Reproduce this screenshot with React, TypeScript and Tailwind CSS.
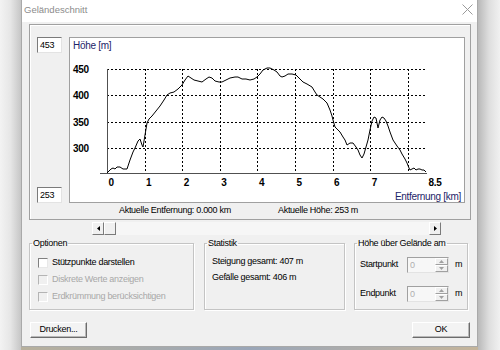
const profile: [number, number][] = [
  [107, 173], [109, 171], [111, 169], [113, 168], [115, 169], [117, 167], [120, 167], [123, 169],
  [127, 169], [130, 160], [133, 152], [135, 148], [138, 141], [140, 139], [142, 145], [143, 147],
  [145, 135], [147, 123], [149, 119], [152, 116], [156, 111], [160, 106], [164, 100], [167, 95],
  [170, 93], [174, 92], [178, 89], [182, 85], [185, 80], [188, 76], [191, 78], [194, 80],
  [198, 81], [202, 82], [206, 79], [209, 77], [212, 78], [215, 81], [219, 82], [222, 82],
  [226, 80], [230, 78], [235, 77], [238, 77], [242, 79], [246, 79], [250, 80], [254, 79],
  [257, 77], [260, 74], [263, 70], [267, 68], [270, 68], [274, 70], [277, 72], [280, 76],
  [282, 77], [285, 76], [288, 74], [292, 74], [296, 75], [300, 79], [303, 82], [307, 84],
  [312, 87], [315, 92], [317, 95], [320, 97], [323, 99], [327, 103], [330, 110], [332, 116],
  [333, 120], [335, 127], [338, 130], [340, 132], [343, 137], [345, 140], [347, 145], [350, 143],
  [353, 143], [356, 147], [358, 150], [360, 155], [362, 158], [364, 154], [366, 147], [368, 140],
  [370, 130], [372, 121], [374, 117], [376, 118], [378, 128], [380, 120], [382, 117], [384, 118],
  [386, 121], [388, 126], [390, 132], [393, 140], [395, 143], [397, 146], [400, 150], [402, 154],
  [405, 159], [407, 163], [409, 168], [410, 170], [412, 169], [414, 168], [416, 170], [418, 169],
  [420, 169], [422, 170], [424, 170], [426, 172],
];

const yTicks = [
  { label: "450", y: 31.5 },
  { label: "400", y: 57.5 },
  { label: "350", y: 84.5 },
  { label: "300", y: 110.5 },
];

const xTicks = ["0", "1", "2", "3", "4", "5", "6", "7"];

function ProfileChart() {
  // chart box content starts at (70, 38) on the page
  const pts = profile.map(([x, y]) => `${x - 70},${y - 38}`).join(" ");
  const x0 = 37;
  const kx = 37.6;
  const font = "'Liberation Sans', Arial, sans-serif";

  return (
    <svg width="394" height="164" className="block">
      {yTicks.map((t) => (
        <line key={t.label} x1={x0} x2={357} y1={t.y} y2={t.y} stroke="#000" strokeDasharray="2 2" shapeRendering="crispEdges" />
      ))}
      {[1, 2, 3, 4, 5, 6, 7, 8].map((k) => {
        const x = Math.round(x0 + k * kx) + 0.5;
        return <line key={k} x1={x} x2={x} y1={31} y2={135} stroke="#000" strokeDasharray="2 2" shapeRendering="crispEdges" />;
      })}
      <line x1={37.5} x2={37.5} y1={31} y2={135} stroke="#505050" shapeRendering="crispEdges" />
      <line x1={30} x2={357} y1={135.5} y2={135.5} stroke="#505050" shapeRendering="crispEdges" />
      <polyline points={pts} fill="none" stroke="#000" strokeWidth={1} />

      <text x={3} y={11} fontFamily={font} fontSize={10} fill="#1c2468">Höhe [m]</text>
      {yTicks.map((t) => (
        <text key={t.label} x={3} y={t.y + 3.5} fontFamily={font} fontSize={10} fontWeight="bold" fill="#000">
          {t.label}
        </text>
      ))}
      {xTicks.map((l, k) => (
        <text key={l} x={x0 + k * kx + 1.5} y={148} fontFamily={font} fontSize={10} fontWeight="bold" fill="#000">
          {l}
        </text>
      ))}
      <text x={358.5} y={148} fontFamily={font} fontSize={10} fontWeight="bold" fill="#000">8.5</text>
      <text x={391} y={162} textAnchor="end" fontFamily={font} fontSize={10} fill="#1c2468">Entfernung [km]</text>
    </svg>
  );
}

function Sunken({ value, className }: { value: string; className?: string }) {
  return (
    <div
      className={
        "h-[16px] bg-white border border-t-[#7a7a7a] border-l-[#7a7a7a] border-r-[#e3e3e3] border-b-[#e3e3e3] pl-[2px] leading-[14px] text-black " +
        (className ?? "")
      }
    >
      {value}
    </div>
  );
}

function Check({ label, disabled }: { label: string; disabled?: boolean }) {
  return (
    <div className="h-[17px] flex items-center gap-[4px]">
      <div
        className={
          disabled
            ? "w-[10px] h-[10px] bg-[#f0f0f0] border border-t-[#b4b4b4] border-l-[#b4b4b4] border-r-white border-b-white"
            : "w-[10px] h-[10px] bg-white border border-t-[#808080] border-l-[#808080] border-r-[#e8e8e8] border-b-[#e8e8e8]"
        }
      />
      <span className={disabled ? "text-[#a8a8a8]" : "text-black"}>{label}</span>
    </div>
  );
}

function SpinField() {
  return (
    <div className="w-[42px] h-[16px] flex bg-[#f7f7f7] border border-t-[#a0a0a0] border-l-[#a0a0a0] border-r-[#e3e3e3] border-b-[#e3e3e3]">
      <span className="flex-1 pl-[2px] leading-[14px] text-[#b0b0b0]">0</span>
      <div className="w-[13px] flex flex-col">
        <div className="flex-1 flex items-center justify-center bg-[#f0f0f0] border border-t-white border-l-white border-r-[#a0a0a0] border-b-[#a0a0a0]">
          <svg width="5" height="3"><polygon points="0,3 5,3 2.5,0" fill="#a0a0a0" /></svg>
        </div>
        <div className="flex-1 flex items-center justify-center bg-[#f0f0f0] border border-t-white border-l-white border-r-[#a0a0a0] border-b-[#a0a0a0]">
          <svg width="5" height="3"><polygon points="0,0 5,0 2.5,3" fill="#a0a0a0" /></svg>
        </div>
      </div>
    </div>
  );
}

function Group({ title, className, children }: { title: string; className: string; children: React.ReactNode }) {
  return (
    <fieldset className={"h-[72px] border border-[#c4c4c4] shadow-[inset_1px_1px_0_#fff,1px_1px_0_#fff] " + className}>
      <legend className="ml-[2px] px-[1px] leading-[11px] text-black">{title}</legend>
      {children}
    </fieldset>
  );
}

function Button({ label, className }: { label: string; className: string }) {
  return (
    <div
      className={
        "h-[16px] flex items-center justify-center bg-[#f3f3f3] border border-t-white border-l-white border-r-[#6c6c6c] border-b-[#6c6c6c] shadow-[inset_-1px_-1px_0_#b8b8b8] text-black " +
        className
      }
    >
      {label}
    </div>
  );
}

function ArrowButton({ dir }: { dir: "left" | "right" }) {
  return (
    <div className="w-[12px] h-full flex items-center justify-center bg-[#f0f0f0] border border-t-white border-l-white border-r-[#7a7a7a] border-b-[#7a7a7a]">
      <svg width="3" height="5">
        <polygon points={dir === "left" ? "3,0 3,5 0,2.5" : "0,0 0,5 3,2.5"} fill="#000" />
      </svg>
    </div>
  );
}

export default function App() {
  return (
    <div className="w-[500px] h-[350px] flex overflow-hidden bg-[#ececec] font-['Liberation_Sans',Arial,sans-serif] text-[9px] tracking-[-0.3px]">
      <div className="w-[21px] h-full bg-gradient-to-r from-[#f3f3f3] via-[#e6e6e6] to-[#c6c6c6]" />

      <div className="w-[457px] h-full flex flex-col">
        <div className="h-[347px] flex flex-col bg-[#f0f0f0] border-x border-b border-[#a9a9a9]">
          <div className="h-[22px] shrink-0 bg-white flex items-center justify-between pl-[2px] pr-[4px] pb-[2px]">
            <span className="text-[9.5px] tracking-normal text-[#8c8c8c]">Geländeschnitt</span>
            <svg width="11" height="11" className="mt-[-2px]">
              <path d="M0.5 0.5 L10.5 10.5 M10.5 0.5 L0.5 10.5" stroke="#9a9a9a" strokeWidth="1" />
            </svg>
          </div>

          <div className="mt-[2px] ml-[7px] w-[442px] h-[196px] shrink-0 border border-[#a0a0a0] shadow-[inset_1px_1px_0_#fff] pt-[12px] pl-[7px]">
            <div className="flex gap-[7px]">
              <div className="w-[25px] h-[166px] flex flex-col justify-between">
                <Sunken value="453" />
                <Sunken value="253" />
              </div>
              <div className="w-[396px] h-[166px] bg-white border border-[#a0a0a0]">
                <ProfileChart />
              </div>
            </div>
            <div className="h-[15px] flex items-center pl-[82px] text-black">
              <span className="w-[159px]">Aktuelle Entfernung: 0.000 km</span>
              <span>Aktuelle Höhe: 253 m</span>
            </div>
          </div>

          <div className="mt-[2px] ml-[70px] w-[349px] h-[13px] shrink-0 flex bg-[#f6f6f6]">
            <ArrowButton dir="left" />
            <div className="w-[12px] h-full bg-[#f0f0f0] border border-t-white border-l-white border-r-[#7a7a7a] border-b-[#7a7a7a]" />
            <div className="flex-1" />
            <ArrowButton dir="right" />
          </div>

          <div className="mt-[3px] ml-[7px] flex shrink-0">
            <Group title="Optionen" className="w-[165px]">
              <div className="pt-[5px] pl-[8px]">
                <Check label="Stützpunkte darstellen" />
                <Check label="Diskrete Werte anzeigen" disabled />
                <Check label="Erdkrümmung berücksichtigen" disabled />
              </div>
            </Group>
            <Group title="Statistik" className="w-[141px] ml-[10px]">
              <div className="pt-[5px] pl-[7px] text-black">
                <div className="h-[16px] flex items-center">Steigung gesamt: 407 m</div>
                <div className="h-[16px] flex items-center">Gefälle gesamt: 406 m</div>
              </div>
            </Group>
            <Group title="Höhe über Gelände am" className="w-[114px] ml-[9px]">
              <div className="pt-[8px] pl-[5px] text-black">
                <div className="h-[16px] flex items-center">
                  <span className="w-[47px]">Startpunkt</span>
                  <SpinField />
                  <span className="ml-[6px]">m</span>
                </div>
                <div className="mt-[13px] h-[16px] flex items-center">
                  <span className="w-[47px]">Endpunkt</span>
                  <SpinField />
                  <span className="ml-[6px]">m</span>
                </div>
              </div>
            </Group>
          </div>

          <div className="mt-[12px] flex justify-between pl-[8px] pr-[7px]">
            <Button label="Drucken..." className="w-[57px]" />
            <Button label="OK" className="w-[58px]" />
          </div>
        </div>
        <div className="flex-1 bg-gradient-to-r from-[#b7b09c] via-[#9aa6b8] to-[#c4b49a]" />
      </div>

      <div className="w-[22px] h-full bg-gradient-to-r from-[#b9b9b9] via-[#dedede] to-[#f1f1f1]" />
    </div>
  );
}
